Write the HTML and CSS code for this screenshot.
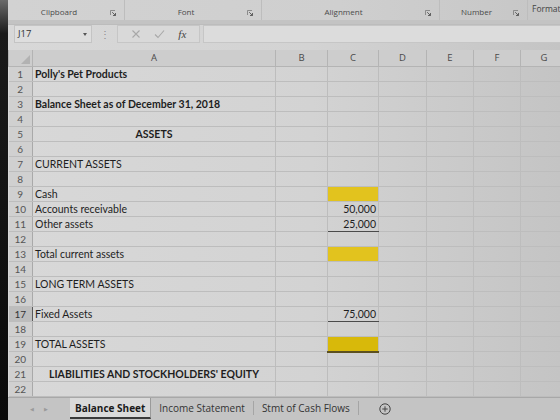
FILE: index.html
```html
<!DOCTYPE html>
<html>
<head>
    <title>Balance Sheet - Excel</title>
    <meta charset="UTF-8">
    <link rel="stylesheet" href="styles.css">
</head>
<body>
<div class="screen">
    <div class="bezel"></div>
    <div class="app">
        <div class="ribbon">
            <div class="group g-clip"><span class="glabel">Clipboard</span><span class="launcher"><svg width="6" height="6" viewBox="0 0 6 6"><path d="M0.5 5V0.5H5" fill="none" stroke="#7a7a7a" stroke-width="0.8"/><path d="M2.2 2.2L5.5 5.5M5.5 3V5.5H3" fill="none" stroke="#555" stroke-width="0.9"/></svg></span></div>
            <div class="group g-font"><span class="glabel">Font</span><span class="launcher"><svg width="6" height="6" viewBox="0 0 6 6"><path d="M0.5 5V0.5H5" fill="none" stroke="#7a7a7a" stroke-width="0.8"/><path d="M2.2 2.2L5.5 5.5M5.5 3V5.5H3" fill="none" stroke="#555" stroke-width="0.9"/></svg></span></div>
            <div class="group g-align"><span class="glabel">Alignment</span><span class="launcher"><svg width="6" height="6" viewBox="0 0 6 6"><path d="M0.5 5V0.5H5" fill="none" stroke="#7a7a7a" stroke-width="0.8"/><path d="M2.2 2.2L5.5 5.5M5.5 3V5.5H3" fill="none" stroke="#555" stroke-width="0.9"/></svg></span></div>
            <div class="group g-number"><span class="glabel">Number</span><span class="launcher"><svg width="6" height="6" viewBox="0 0 6 6"><path d="M0.5 5V0.5H5" fill="none" stroke="#7a7a7a" stroke-width="0.8"/><path d="M2.2 2.2L5.5 5.5M5.5 3V5.5H3" fill="none" stroke="#555" stroke-width="0.9"/></svg></span></div>
            <div class="group g-format"><span class="format-label">Format</span></div>
        </div>
        <div class="ribbon-edge"></div>

        <div class="formula-bar">
            <div class="name-box">J17<span class="caret"></span></div>
            <div class="grip">&#8942;</div>
            <div class="fx-buttons">
                <svg width="10" height="10" viewBox="0 0 10 10"><path d="M1.5 1.5L8.5 8.5M8.5 1.5L1.5 8.5" stroke="#a8a8a8" stroke-width="1.1"/></svg>
                <svg width="11" height="10" viewBox="0 0 11 10"><path d="M1 5.5L4 8.5L10 1.5" fill="none" stroke="#a8a8a8" stroke-width="1.1"/></svg>
                <span class="fx">fx</span>
            </div>
            <div class="formula-input"></div>
        </div>

        <table class="sheet">
            <colgroup>
                <col class="c-row"><col class="c-a"><col class="c-b"><col class="c-c">
                <col class="c-d"><col class="c-e"><col class="c-f"><col class="c-g">
            </colgroup>
            <thead>
                <tr>
                    <th class="corner"><span class="corner-tri"></span></th>
                    <th>A</th><th>B</th><th>C</th><th>D</th><th>E</th><th>F</th><th>G</th>
                </tr>
            </thead>
            <tbody>
                <tr><th>1</th><td class="bold">Polly's Pet Products</td><td></td><td></td><td></td><td></td><td></td><td></td></tr>
                <tr><th>2</th><td></td><td></td><td></td><td></td><td></td><td></td><td></td></tr>
                <tr><th>3</th><td class="bold">Balance Sheet as of December 31, 2018</td><td></td><td></td><td></td><td></td><td></td><td></td></tr>
                <tr><th>4</th><td></td><td></td><td></td><td></td><td></td><td></td><td></td></tr>
                <tr><th>5</th><td class="bold center">ASSETS</td><td></td><td></td><td></td><td></td><td></td><td></td></tr>
                <tr><th>6</th><td></td><td></td><td></td><td></td><td></td><td></td><td></td></tr>
                <tr><th>7</th><td>CURRENT ASSETS</td><td></td><td></td><td></td><td></td><td></td><td></td></tr>
                <tr><th>8</th><td></td><td></td><td></td><td></td><td></td><td></td><td></td></tr>
                <tr><th>9</th><td>Cash</td><td></td><td class="fill"></td><td></td><td></td><td></td><td></td></tr>
                <tr><th>10</th><td>Accounts receivable</td><td></td><td class="num">50,000</td><td></td><td></td><td></td><td></td></tr>
                <tr><th>11</th><td>Other assets</td><td></td><td class="num underline">25,000</td><td></td><td></td><td></td><td></td></tr>
                <tr><th>12</th><td></td><td></td><td></td><td></td><td></td><td></td><td></td></tr>
                <tr><th>13</th><td>Total current assets</td><td></td><td class="fill"></td><td></td><td></td><td></td><td></td></tr>
                <tr><th>14</th><td></td><td></td><td></td><td></td><td></td><td></td><td></td></tr>
                <tr><th>15</th><td>LONG TERM ASSETS</td><td></td><td></td><td></td><td></td><td></td><td></td></tr>
                <tr><th>16</th><td></td><td></td><td></td><td></td><td></td><td></td><td></td></tr>
                <tr><th class="active">17</th><td>Fixed Assets</td><td></td><td class="num underline">75,000</td><td></td><td></td><td></td><td></td></tr>
                <tr><th>18</th><td></td><td></td><td></td><td></td><td></td><td></td><td></td></tr>
                <tr><th>19</th><td>TOTAL ASSETS</td><td></td><td class="fill total"></td><td></td><td></td><td></td><td></td></tr>
                <tr><th>20</th><td></td><td></td><td></td><td></td><td></td><td></td><td></td></tr>
                <tr><th>21</th><td class="bold center">LIABILITIES AND STOCKHOLDERS' EQUITY</td><td></td><td></td><td></td><td></td><td></td><td></td></tr>
                <tr><th>22</th><td></td><td></td><td></td><td></td><td></td><td></td><td></td></tr>
            </tbody>
        </table>

        <div class="tabs">
            <div class="tab-nav"><span>&#9664;</span><span>&#9654;</span></div>
            <div class="tab active">Balance Sheet</div>
            <div class="tab">Income Statement</div>
            <div class="tab">Stmt of Cash Flows</div>
            <div class="tab-add">
                <svg width="12" height="12" viewBox="0 0 12 12"><circle cx="6" cy="6" r="5.2" fill="none" stroke="#444" stroke-width="1"/><path d="M6 3.3V8.7M3.3 6H8.7" stroke="#444" stroke-width="1"/></svg>
            </div>
        </div>
    </div>
</div>
</body>
</html>
```

FILE: styles.css
```css
* {
    box-sizing: border-box;
}
body {
    margin: 0;
    width: 560px;
    height: 420px;
    overflow: hidden;
    font-family: 'Open Sans', 'Liberation Sans', sans-serif;
    background: #cfcfcf;
}
.screen {
    display: flex;
    height: 420px;
}
.bezel {
    flex: none;
    width: 8px;
    background: linear-gradient(#6a6a6a, #1a1a1a 8%, #0a0a0a);
}
.app {
    flex: 1;
    min-width: 0;
    display: flex;
    flex-direction: column;
    overflow: hidden;
    background: linear-gradient(90deg, #d8d8d8, #d3d3d3 55%, #c4c4c4);
}

/* ribbon group labels */
.ribbon {
    height: 20px;
    display: flex;
    background: linear-gradient(90deg, #d2d2d2, #cfcfcf 60%, #c6c6c6);
}
.group {
    flex: none;
    display: flex;
    align-items: flex-end;
    padding-bottom: 3px;
    border-right: 1px solid #bdbdbd;
}
.g-clip { width: 117px; }
.g-font { width: 137px; }
.g-align { width: 178px; }
.g-number { width: 88px; }
.g-format {
    flex: 1;
    border-right: none;
    align-items: flex-start;
    padding: 3px 0 0 4px;
}
.glabel {
    flex: 1;
    text-align: center;
    font-size: 8px;
    color: #4a4a4a;
    line-height: 10px;
}
.format-label {
    font-size: 8.5px;
    color: #444;
    white-space: nowrap;
}
.launcher {
    width: 14px;
    display: flex;
    justify-content: flex-start;
    padding-bottom: 1px;
}
.ribbon-edge {
    height: 5px;
    background: #c3c3c3;
    border-bottom: 1px solid #bcbcbc;
}

/* name box and formula bar */
.formula-bar {
    height: 25px;
    display: flex;
    align-items: flex-start;
}
.name-box {
    width: 78px;
    height: 18px;
    margin-left: 6px;
    background: #dedede;
    border: 1px solid #c4c4c4;
    font-size: 9.5px;
    color: #333;
    padding-left: 3px;
    line-height: 16px;
    position: relative;
}
.caret {
    position: absolute;
    right: 4px;
    top: 7px;
    border-left: 2.5px solid transparent;
    border-right: 2.5px solid transparent;
    border-top: 3px solid #555;
}
.grip {
    width: 25px;
    text-align: center;
    color: #8a8a8a;
    font-size: 10px;
    line-height: 18px;
}
.fx-buttons {
    width: 83px;
    height: 18px;
    background: #d9d9d9;
    border: 1px solid #c6c6c6;
    display: flex;
    align-items: center;
    justify-content: space-around;
    padding: 0 6px;
}
.fx {
    font-family: 'Liberation Serif', serif;
    font-style: italic;
    font-size: 11px;
    color: #444;
}
.formula-input {
    flex: 1;
    height: 18px;
    margin-left: 3px;
    background: #dcdcdc;
    border: 1px solid #c6c6c6;
    border-right: none;
}

/* worksheet grid */
.sheet {
    table-layout: fixed;
    border-collapse: collapse;
    width: 559px;
    font-family: Lato, 'Liberation Sans', sans-serif;
    font-size: 10.5px;
    color: #1e1e1e;
}
.c-row { width: 24px; }
.c-a { width: 243px; }
.c-b { width: 52px; }
.c-c { width: 51px; }
.c-d { width: 48px; }
.c-e { width: 47px; }
.c-f { width: 47px; }
.c-g { width: 47px; }
.sheet td, .sheet th {
    height: 15px;
    padding: 0 2px;
    border: 1px solid #bdbdbd;
    white-space: nowrap;
    overflow: hidden;
    line-height: 13px;
}
.sheet thead th {
    height: 17px;
    font-family: 'Open Sans', sans-serif;
    font-weight: normal;
    font-size: 9.5px;
    color: #4a4a4a;
    background: #cdcdcd;
    border-top: none;
    border-bottom: 1px solid #a9a9a9;
    border-color: #b4b4b4;
}
.sheet tbody th {
    font-weight: normal;
    font-size: 10px;
    color: #555;
    background: #d0d0d0;
    text-align: center;
    border-right: 1px solid #a9a9a9;
    border-left: none;
}
.sheet tbody th.active {
    background: #bdbdbd;
    color: #333;
    border-right: 1px solid #5a5a5a;
}
.corner {
    position: relative;
}
.corner-tri {
    position: absolute;
    right: 2px;
    bottom: 2px;
    border-left: 9px solid transparent;
    border-bottom: 9px solid #b2b2b2;
}
.bold { font-weight: bold; }
.center { text-align: center; }
.num { text-align: right; }
.underline { border-bottom: 1px solid #4a4a4a !important; }
.fill { background: #e2c31e; }
.total {
    background: #d8b90a;
    border-bottom: 2px solid #5c5020 !important;
}

/* sheet tabs */
.tabs {
    flex: 1;
    display: flex;
    align-items: stretch;
    background: #c4c4c4;
    border-top: 1px solid #a8a8a8;
    font-size: 10px;
    color: #333;
}
.tab-nav {
    width: 62px;
    display: flex;
    gap: 10px;
    justify-content: center;
    align-items: center;
    font-size: 5px;
    color: #9a9a9a;
}
.tab {
    padding: 0 8px;
    display: flex;
    align-items: center;
    white-space: nowrap;
    border-right: 1px solid #a5a5a5;
    margin: 3px 0 5px;
}
.tab.active {
    margin: 0 0 1px;
    padding: 0 5px;
    background: #dadada;
    font-weight: bold;
    color: #1a1a1a;
    border-right: 1px solid #9a9a9a;
    border-bottom: 2px solid #3a3a3a;
}
.tab-add {
    width: 52px;
    display: flex;
    align-items: center;
    justify-content: center;
}
```
